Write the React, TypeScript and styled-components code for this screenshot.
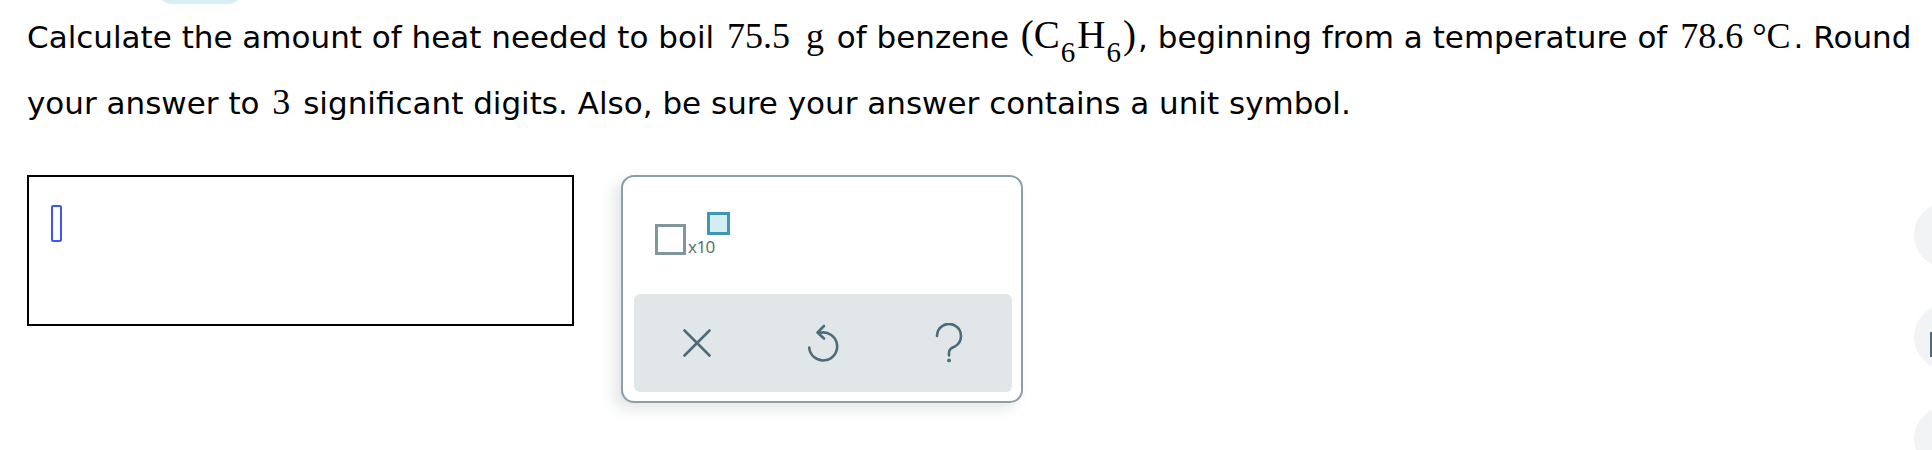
import React from "react";
import styled, { createGlobalStyle } from "styled-components";

const GlobalStyle = createGlobalStyle`
	html, body {
		margin: 0;
		padding: 0;
		background: #ffffff;
	}
	body {
		font-family: "DejaVu Sans", Verdana, sans-serif;
		color: #000000;
		overflow: hidden;
	}
`;

const App = () => {
	return (
		<Page>
			<GlobalStyle />
			<TopTab />
			<Question>
				<Line>
					Calculate the amount of heat needed to boil <Num>75.5</Num>{" "}
					<Num>g</Num> of benzene{" "}
					<Chem>
						(C<Sub>6</Sub>H<Sub>6</Sub>)
					</Chem>
					, beginning from a temperature of <Num>78.6 °C</Num>. Round
				</Line>
				<Line>
					your answer to <Num>3</Num> significant digits. Also, be sure your
					answer contains a unit symbol.
				</Line>
			</Question>
			<AnswerRow>
				<AnswerBox>
					<Cursor />
				</AnswerBox>
				<Keypad>
					<TemplateArea>
						<SciTemplate>
							<BaseSlot />
							<TimesTen>x10</TimesTen>
							<ExpSlot />
						</SciTemplate>
					</TemplateArea>
					<ActionBar>
						<ActionButton aria-label="clear">
							<svg width="40" height="40" viewBox="-20 -20 40 40">
								<path d="M -12.5 -12.5 L 12.5 12.5 M 12.5 -12.5 L -12.5 12.5" />
							</svg>
						</ActionButton>
						<ActionButton aria-label="undo">
							<svg width="40" height="40" viewBox="-20 -20 40 40">
								<path d="M -13.8 4.5 A 14 14 0 1 0 -3 -10.2" />
								<path d="M 1 -17 L -5.5 -10.5 L 1 -4.5" />
							</svg>
						</ActionButton>
						<ActionButton aria-label="help">
							<svg width="40" height="40" viewBox="-20 -20 40 40">
								<path d="M -12 -7 A 12 12 0 1 1 6 3.4 Q 0 5.5 0 9.5 V 12.5" />
								<circle cx="0" cy="17.4" r="1.9" fill="#4b6c78" stroke="none" />
							</svg>
						</ActionButton>
					</ActionBar>
				</Keypad>
			</AnswerRow>
			<SideRail>
				<RailButton />
				<RailButton>
					<RailMark />
				</RailButton>
				<RailButton />
			</SideRail>
		</Page>
	);
};

const Page = styled.div`
	position: relative;
	width: 1932px;
	height: 450px;
	box-sizing: border-box;
	padding: 0 0 0 27px;
	overflow: hidden;
`;
const TopTab = styled.div`
	width: 86px;
	height: 30px;
	margin: -26px 0 0 130px;
	border-radius: 15px;
	background-color: #d9eff5;
`;
const Question = styled.div`
	margin-top: 0;
	font-size: 31px;
	line-height: 66px;
	white-space: nowrap;
`;
const Line = styled.div`
	display: block;
`;
const Num = styled.span`
	font-family: "Liberation Serif", "Times New Roman", serif;
	font-size: 36px;
	line-height: 1;
	margin: 0 3px;
`;
const Chem = styled.span`
	font-family: "Liberation Serif", "Times New Roman", serif;
	font-size: 39px;
	line-height: 1;
	margin: 0 2px;
`;
const Sub = styled.span`
	font-size: 29px;
	position: relative;
	top: 14px;
	line-height: 0;
	margin: 0 2px 0 1px;
`;
const AnswerRow = styled.div`
	display: flex;
	align-items: flex-start;
	gap: 47px;
	margin-top: 39px;
`;
const AnswerBox = styled.div`
	width: 547px;
	height: 151px;
	box-sizing: border-box;
	border: 2px solid #000000;
	padding: 28px 0 0 22px;
`;
const Cursor = styled.div`
	width: 11px;
	height: 37px;
	box-sizing: border-box;
	border: 2px solid #3e54ff;
	border-radius: 2px;
`;
const Keypad = styled.div`
	width: 402px;
	height: 228px;
	box-sizing: border-box;
	border: 2px solid #8a9fa8;
	border-radius: 13px;
	padding: 35px 9px 9px 11px;
	background: #ffffff;
	box-shadow: -7px 6px 14px rgba(40, 60, 70, 0.13);
	display: flex;
	flex-direction: column;
`;
const TemplateArea = styled.div`
	height: 43px;
	padding-left: 21px;
`;
const SciTemplate = styled.div`
	display: inline-flex;
	align-items: flex-end;
	height: 43px;
`;
const BaseSlot = styled.div`
	width: 31px;
	height: 31px;
	box-sizing: border-box;
	border: 3px solid #7f969f;
	background: #ffffff;
`;
const TimesTen = styled.span`
	font-family: "Open Sans", "Liberation Sans", sans-serif;
	font-size: 17px;
	line-height: 1;
	color: #4e6b76;
	margin-left: 2px;
	letter-spacing: -0.5px;
`;
const ExpSlot = styled.div`
	align-self: flex-start;
	width: 23px;
	height: 23px;
	box-sizing: border-box;
	border: 3px solid #3d97b5;
	background: #d5eef4;
	margin-left: -8px;
`;
const ActionBar = styled.div`
	margin-top: 39px;
	height: 98px;
	border-radius: 6px;
	background-color: #e1e6e9;
	display: grid;
	grid-template-columns: repeat(3, 1fr);
	align-items: center;
	justify-items: center;
`;
const ActionButton = styled.div`
	width: 40px;
	height: 40px;
	display: flex;
	align-items: center;
	justify-content: center;
	svg {
		fill: none;
		stroke: #4b6c78;
		stroke-width: 2.6;
		stroke-linecap: round;
		stroke-linejoin: round;
	}
`;
const SideRail = styled.div`
	position: absolute;
	right: -48px;
	top: 202px;
	display: flex;
	flex-direction: column;
	gap: 36px;
`;
const RailButton = styled.div`
	position: relative;
	width: 66px;
	height: 66px;
	border-radius: 50%;
	background-color: #f1f3f5;
`;
const RailMark = styled.div`
	position: absolute;
	left: 16px;
	top: 28px;
	width: 3px;
	height: 25px;
	background-color: #4b6c78;
`;

export default App;
